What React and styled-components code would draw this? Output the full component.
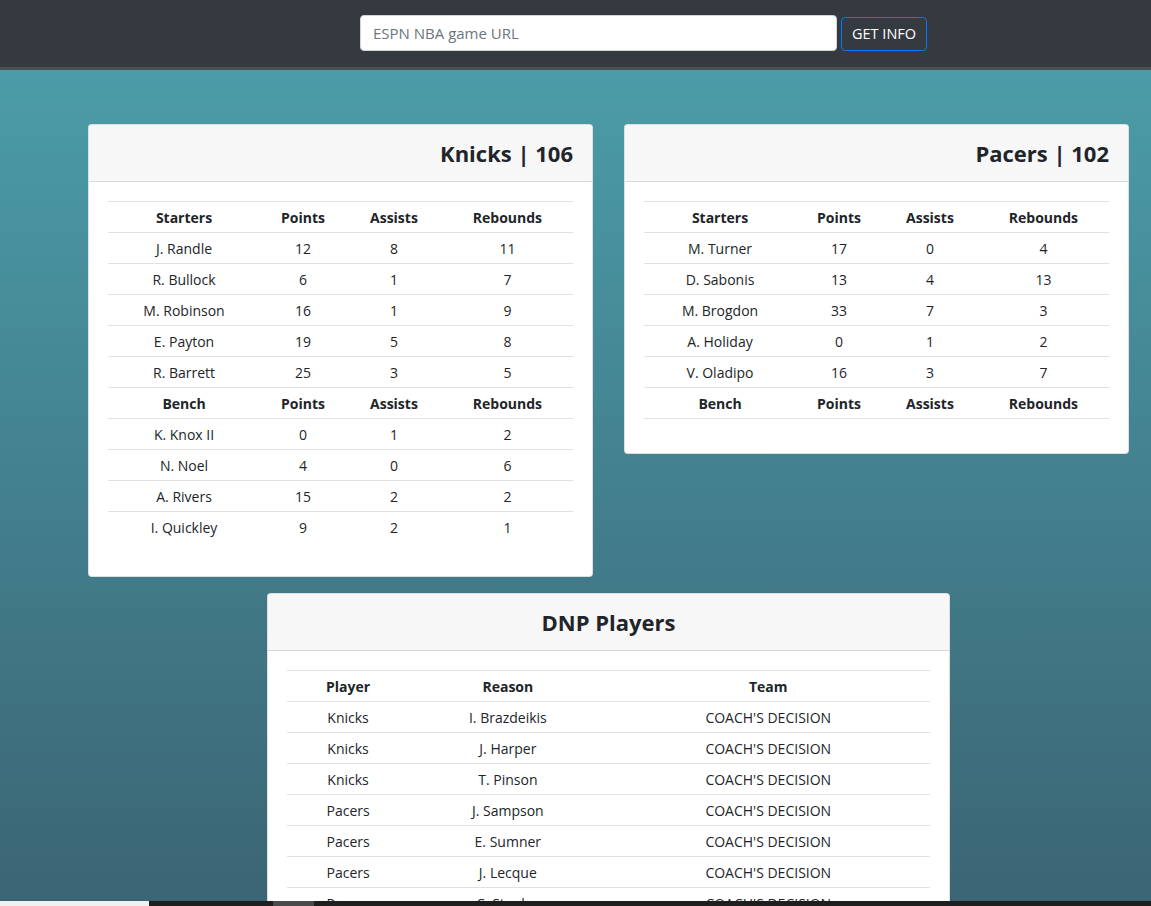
import styled, { createGlobalStyle } from 'styled-components';

const GlobalStyle = createGlobalStyle`
  html, body {
    margin: 0;
    padding: 0;
    overflow: hidden;
  }
  body {
    font-family: "Open Sans", "Noto Sans", sans-serif;
    color: #212529;
    background: #3a6171;
  }
`;

const Page = styled.div`
  min-height: 100vh;
  background: linear-gradient(180deg, #4b9ca8 70px, #3a6171 100%);
`;

const NavBar = styled.div`
  display: flex;
  align-items: center;
  height: 67px;
  padding-left: 360px;
  background: #343a40;
  border-bottom: 3px solid #4a4f54;
  gap: 4px;
`;

const UrlInput = styled.input`
  box-sizing: border-box;
  width: 477px;
  height: 36px;
  margin-top: -1px;
  padding: 0 12px;
  border: 1px solid #ced4da;
  border-radius: 4px;
  font-family: inherit;
  font-size: 15px;
  color: #495057;
  &::placeholder {
    color: #6c757d;
  }
`;

const InfoButton = styled.button`
  box-sizing: border-box;
  height: 34px;
  padding: 0 10px;
  background: transparent;
  border: 1px solid #007bff;
  border-radius: 4px;
  color: #fff;
  font-family: inherit;
  font-size: 14.5px;
`;

const Main = styled.div`
  width: 1217px;
  display: flex;
  flex-direction: column;
  align-items: center;
  padding-top: 54px;
  gap: 16px;
`;

const CardRow = styled.div`
  display: flex;
  align-items: flex-start;
  gap: 31px;
`;

const Card = styled.div`
  box-sizing: border-box;
  width: ${(p) => p.$width}px;
  background: #fff;
  border: 1px solid rgba(0, 0, 0, 0.125);
  border-radius: 4px;
  overflow: hidden;
`;

const CardHeader = styled.div`
  display: flex;
  align-items: center;
  justify-content: ${(p) => (p.$center ? 'center' : 'flex-end')};
  height: 56px;
  padding: 0 19px;
  background: #f7f7f7;
  border-bottom: 1px solid rgba(0, 0, 0, 0.125);
  font-size: 22px;
  font-weight: 700;
`;

const CardBody = styled.div`
  padding: 19px;
`;

const Table = styled.table`
  width: 100%;
  border-collapse: collapse;
  margin-bottom: 15px;
  font-size: 14px;
  text-align: center;
`;

const Cell = styled.td`
  height: 30px;
  padding: 0 4px;
  border-top: 1px solid #dee2e6;
  font-weight: ${(p) => (p.$head ? 700 : 400)};
  ${(p) => p.$head && 'border-bottom: 1px solid #dee2e6;'}
`;

const ScrollBar = styled.div`
  position: fixed;
  left: 0;
  right: 0;
  bottom: 0;
  height: 5px;
  display: flex;
`;

const ScrollPart = styled.div`
  width: ${(p) => (p.$width ? `${p.$width}px` : 'auto')};
  flex: ${(p) => (p.$width ? 'none' : '1')};
  background: ${(p) => p.$color};
`;

const knicks = {
  title: 'Knicks | 106',
  starters: [
    ['J. Randle', 12, 8, 11],
    ['R. Bullock', 6, 1, 7],
    ['M. Robinson', 16, 1, 9],
    ['E. Payton', 19, 5, 8],
    ['R. Barrett', 25, 3, 5],
  ],
  bench: [
    ['K. Knox II', 0, 1, 2],
    ['N. Noel', 4, 0, 6],
    ['A. Rivers', 15, 2, 2],
    ['I. Quickley', 9, 2, 1],
  ],
};

const pacers = {
  title: 'Pacers | 102',
  starters: [
    ['M. Turner', 17, 0, 4],
    ['D. Sabonis', 13, 4, 13],
    ['M. Brogdon', 33, 7, 3],
    ['A. Holiday', 0, 1, 2],
    ['V. Oladipo', 16, 3, 7],
  ],
  bench: [],
};

const dnp = [
  ['Knicks', 'I. Brazdeikis', "COACH'S DECISION"],
  ['Knicks', 'J. Harper', "COACH'S DECISION"],
  ['Knicks', 'T. Pinson', "COACH'S DECISION"],
  ['Pacers', 'J. Sampson', "COACH'S DECISION"],
  ['Pacers', 'E. Sumner', "COACH'S DECISION"],
  ['Pacers', 'J. Lecque', "COACH'S DECISION"],
  ['Pacers', 'C. Stanley', "COACH'S DECISION"],
];

const HeadRow = ({ cells }) => (
  <tr>
    {cells.map((c) => (
      <Cell as="th" $head key={c}>{c}</Cell>
    ))}
  </tr>
);

const Row = ({ cells }) => (
  <tr>
    {cells.map((c, i) => (
      <Cell key={i}>{c}</Cell>
    ))}
  </tr>
);

const TeamCard = ({ team }) => (
  <Card $width={505}>
    <CardHeader>{team.title}</CardHeader>
    <CardBody>
      <Table>
        <colgroup>
          <col style={{ width: '32.7%' }} />
          <col style={{ width: '18.5%' }} />
          <col style={{ width: '20.6%' }} />
          <col style={{ width: '28.2%' }} />
        </colgroup>
        <tbody>
          <HeadRow cells={['Starters', 'Points', 'Assists', 'Rebounds']} />
          {team.starters.map((r) => <Row key={r[0]} cells={r} />)}
          <HeadRow cells={['Bench', 'Points', 'Assists', 'Rebounds']} />
          {team.bench.map((r) => <Row key={r[0]} cells={r} />)}
        </tbody>
      </Table>
    </CardBody>
  </Card>
);

const App = () => (
  <Page>
    <GlobalStyle />
    <NavBar>
      <UrlInput placeholder="ESPN NBA game URL" />
      <InfoButton>GET INFO</InfoButton>
    </NavBar>
    <Main>
      <CardRow>
        <TeamCard team={knicks} />
        <TeamCard team={pacers} />
      </CardRow>
      <Card $width={683}>
        <CardHeader $center>DNP Players</CardHeader>
        <CardBody>
          <Table>
            <colgroup>
              <col style={{ width: '19%' }} />
              <col style={{ width: '30.7%' }} />
              <col style={{ width: '50.3%' }} />
            </colgroup>
            <tbody>
              <HeadRow cells={['Player', 'Reason', 'Team']} />
              {dnp.map((r) => <Row key={r[1]} cells={r} />)}
            </tbody>
          </Table>
        </CardBody>
      </Card>
    </Main>
    <ScrollBar>
      <ScrollPart $width={149} $color="#f0f0f0" />
      <ScrollPart $width={124} $color="#1e1e1e" />
      <ScrollPart $width={41} $color="#4a4a4a" />
      <ScrollPart $color="#1e1e1e" />
    </ScrollBar>
  </Page>
);

export default App;
